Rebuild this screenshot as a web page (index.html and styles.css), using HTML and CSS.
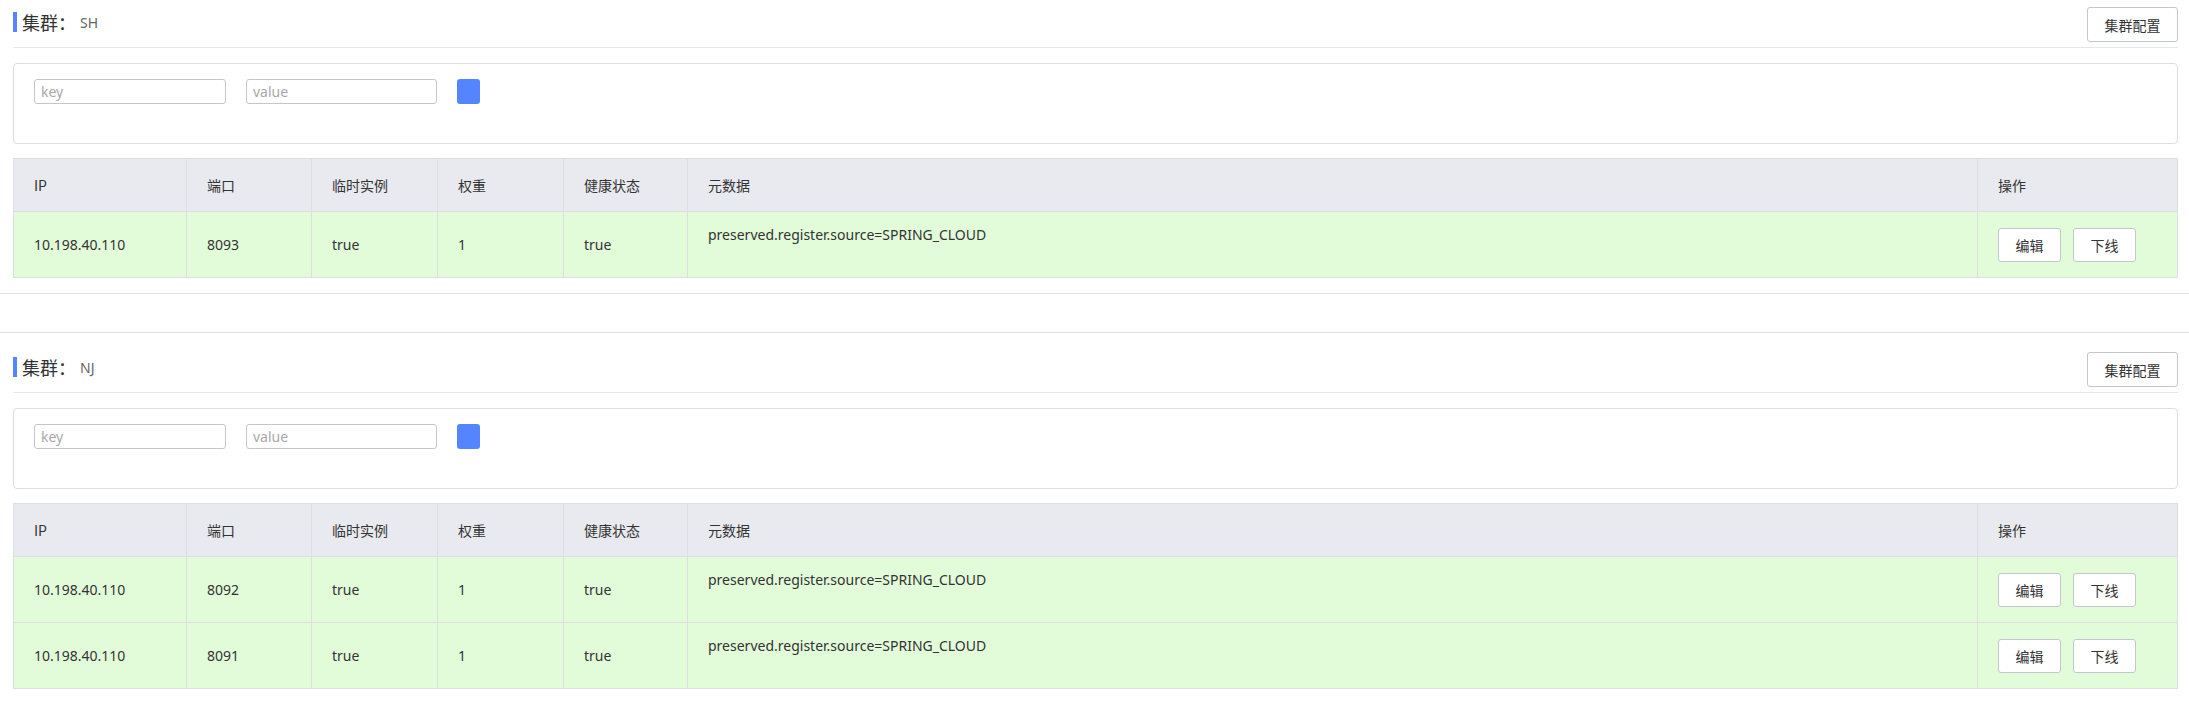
FILE: index.html
```html
<!DOCTYPE html>
<html lang="zh-CN">
<head>
<meta charset="utf-8">
<title>集群</title>
<link rel="stylesheet" href="styles.css">
</head>
<body>
<div class="cluster cluster-first">
  <div class="cluster-head">
    <div class="cluster-title"><span class="bar"></span><span class="label">集群：</span><span class="name">SH</span></div>
    <button class="btn btn-config">集群配置</button>
  </div>
  <div class="filter">
    <input class="filter-input" placeholder="key">
    <input class="filter-input" placeholder="value">
    <button class="btn-add"></button>
  </div>
  <table class="instances">
    <colgroup>
      <col class="c-ip"><col class="c-port"><col class="c-eph"><col class="c-weight"><col class="c-health"><col><col class="c-ops">
    </colgroup>
    <thead>
      <tr><th>IP</th><th>端口</th><th>临时实例</th><th>权重</th><th>健康状态</th><th>元数据</th><th>操作</th></tr>
    </thead>
    <tbody>
      <tr>
        <td>10.198.40.110</td><td>8093</td><td>true</td><td>1</td><td>true</td>
        <td class="meta">preserved.register.source=SPRING_CLOUD</td>
        <td class="ops"><button class="btn btn-op">编辑</button><button class="btn btn-op">下线</button></td>
      </tr>
    </tbody>
  </table>
</div>
<div class="cluster-gap"></div>
<div class="cluster">
  <div class="cluster-head">
    <div class="cluster-title"><span class="bar"></span><span class="label">集群：</span><span class="name">NJ</span></div>
    <button class="btn btn-config">集群配置</button>
  </div>
  <div class="filter">
    <input class="filter-input" placeholder="key">
    <input class="filter-input" placeholder="value">
    <button class="btn-add"></button>
  </div>
  <table class="instances">
    <colgroup>
      <col class="c-ip"><col class="c-port"><col class="c-eph"><col class="c-weight"><col class="c-health"><col><col class="c-ops">
    </colgroup>
    <thead>
      <tr><th>IP</th><th>端口</th><th>临时实例</th><th>权重</th><th>健康状态</th><th>元数据</th><th>操作</th></tr>
    </thead>
    <tbody>
      <tr>
        <td>10.198.40.110</td><td>8092</td><td>true</td><td>1</td><td>true</td>
        <td class="meta">preserved.register.source=SPRING_CLOUD</td>
        <td class="ops"><button class="btn btn-op">编辑</button><button class="btn btn-op">下线</button></td>
      </tr>
      <tr>
        <td>10.198.40.110</td><td>8091</td><td>true</td><td>1</td><td>true</td>
        <td class="meta">preserved.register.source=SPRING_CLOUD</td>
        <td class="ops"><button class="btn btn-op">编辑</button><button class="btn btn-op">下线</button></td>
      </tr>
    </tbody>
  </table>
</div>
</body>
</html>
```
FILE: styles.css
```css
* { box-sizing: border-box; }

body {
  margin: 0;
  background: #fff;
  color: #333;
  font-family: "Noto Sans", "Noto Sans CJK SC", sans-serif;
  font-size: 14px;
}

.cluster {
  padding: 19px 11px 15px 13px;
}

.cluster-first {
  padding-top: 7px;
}

.cluster-gap {
  height: 40px;
  border-top: 1px solid #dfe1e6;
  border-bottom: 1px solid #dfe1e6;
}

.cluster-head {
  display: flex;
  align-items: center;
  justify-content: space-between;
  padding-bottom: 5px;
  border-bottom: 1px solid #e6e7eb;
}

.cluster-title {
  display: flex;
  align-items: center;
  margin-bottom: 5px;
}

.bar {
  width: 4px;
  height: 20px;
  background: #5584ff;
  margin-right: 5px;
}

.label {
  font-family: "Noto Sans CJK SC", sans-serif;
  font-size: 18px;
  color: #333;
  line-height: 24px;
}

.name {
  font-size: 14px;
  color: #666;
  margin-left: 4px;
}

.btn {
  background: #fff;
  border: 1px solid #c4c6cf;
  border-radius: 3px;
  color: #333;
  font-family: "Noto Sans CJK SC", sans-serif;
  font-size: 14px;
  padding: 0 16px;
  cursor: pointer;
}

.btn-config {
  height: 35px;
  width: 91px;
}

.filter {
  margin-top: 15px;
  height: 81px;
  border: 1px solid #dcdee3;
  border-radius: 4px;
  padding: 15px 20px;
  display: flex;
  align-items: flex-start;
  gap: 20px;
}

.filter-input {
  width: 192px;
  height: 25px;
  border: 1px solid #c4c6cf;
  border-radius: 3px;
  padding: 0 6px;
  font-family: "Noto Sans", "Noto Sans CJK SC", sans-serif;
  font-size: 14px;
  color: #333;
  outline: none;
}

.filter-input + .filter-input {
  width: 191px;
}

.filter-input::placeholder {
  color: #a8a8a8;
}

.btn-add {
  width: 23px;
  height: 25px;
  border: none;
  border-radius: 3px;
  background: #5584ff;
  padding: 0;
}

.instances {
  margin-top: 14px;
  width: 100%;
  border-collapse: collapse;
  table-layout: fixed;
  border: 1px solid #dcdee3;
}

.c-ip { width: 173px; }
.c-port { width: 125px; }
.c-eph { width: 126px; }
.c-weight { width: 126px; }
.c-health { width: 124px; }
.c-ops { width: 200px; }

.instances th,
.instances td {
  border: 1px solid #dcdee3;
  padding: 0 20px;
  text-align: left;
  font-weight: normal;
  color: #333;
  white-space: nowrap;
}

.instances th {
  height: 53px;
  background: #e9eaef;
  font-family: "Noto Sans CJK SC", sans-serif;
}

.instances td {
  height: 66px;
  background: #e2fcd9;
}

.instances td.meta {
  vertical-align: top;
  padding-top: 13px;
}

.btn-op {
  height: 34px;
  width: 63px;
  padding: 0;
}

.btn-op + .btn-op {
  margin-left: 12px;
}
```
